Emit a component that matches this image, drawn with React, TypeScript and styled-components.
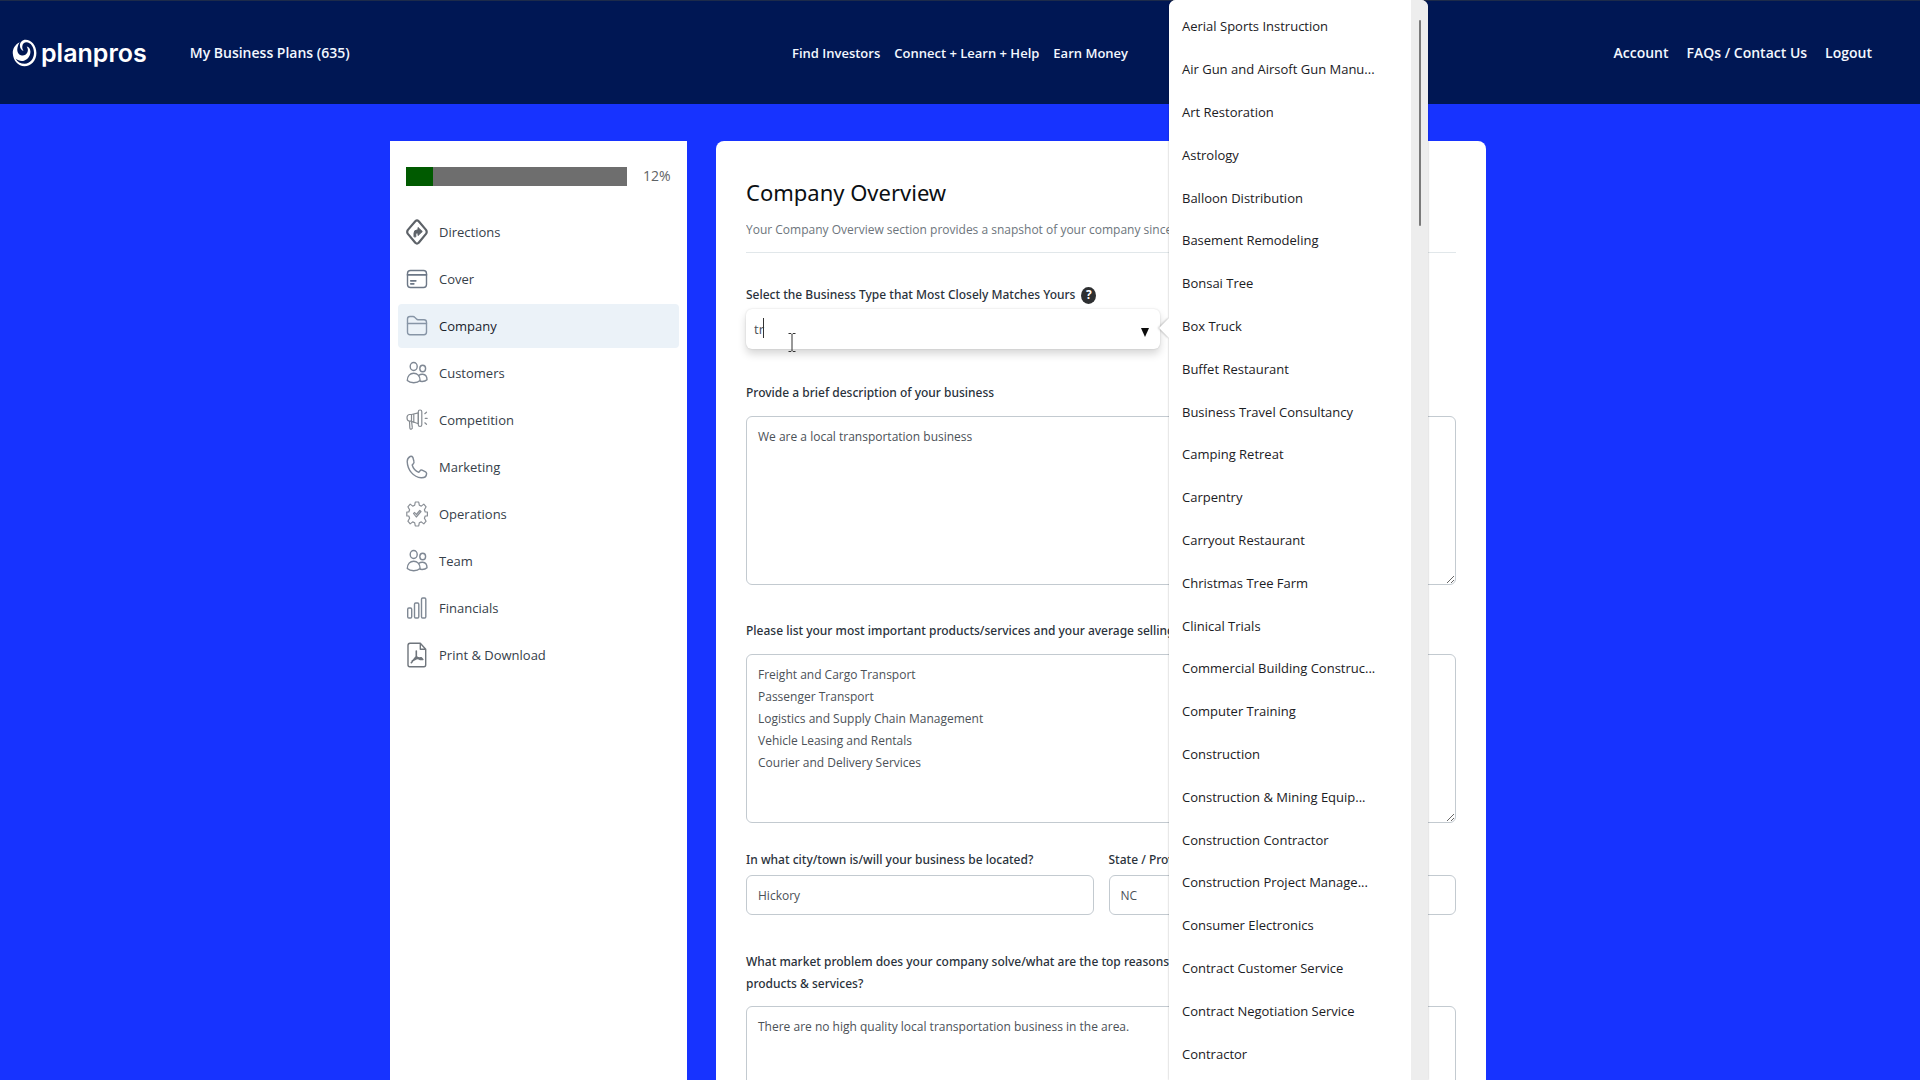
import React, { useState } from "react";
import type { ReactNode } from "react";
import styled, { createGlobalStyle } from "styled-components";

const color = {
  navy: "#001754",
  blue: "#1733ff",
  label: "#2a323b",
  muted: "#6d757c",
  value: "#4b5157",
  border: "#c3cad0",
  icon: "#7f8894",
  active: "#ebf2f8",
};

const GlobalStyle = createGlobalStyle`
  *, *::before, *::after { box-sizing: border-box; }
  body { margin: 0; background: ${color.blue}; }
  body, button, input, textarea {
    font-family: "Open Sans", "Noto Sans", sans-serif;
    font-size: 13px;
    line-height: 22px;
  }
  h1, p, ul { margin: 0; padding: 0; }
`;

const Page = styled.div`
  display: flex;
  flex-direction: column;
  height: 100vh;
  overflow: hidden;
  background: ${color.blue};
`;

/* ---------- Header ---------- */

const Header = styled.header`
  display: grid;
  grid-template-columns: 1fr auto 1fr;
  align-items: center;
  flex: none;
  min-height: 104px;
  padding: 0 12px;
  border-top: 1px solid #1d2b4a;
  background: ${color.navy};
`;

const HeaderStart = styled.div`
  display: flex;
  align-items: center;
  gap: 43px;
`;

const Brand = styled.a`
  display: flex;
  align-items: center;
  gap: 4px;
  color: #fff;
  font: 600 25px/32px Inter, sans-serif;
  text-decoration: none;
`;

const Nav = styled.nav<{ $gap: number; $size: number }>`
  display: flex;
  gap: ${(p) => p.$gap}px;
  font-size: ${(p) => p.$size}px;
`;

const EndNav = styled(Nav)`
  justify-content: flex-end;
  padding-right: 36px;
`;

const NavLink = styled.a`
  color: #f3f8ff;
  font-weight: 600;
  text-decoration: none;
`;

/* ---------- Layout ---------- */

const Content = styled.div`
  display: grid;
  grid-template-columns: 297px minmax(0, 1fr);
  gap: 29px;
  flex: 1;
  width: 100%;
  max-width: 1140px;
  min-height: 0;
  margin: 0 auto;
  padding: 37px 44px 0 0;
`;

const Sidebar = styled.aside`
  padding: 25px 8px;
  background: #fff;
`;

const ProgressRow = styled.div`
  display: flex;
  align-items: center;
  gap: 16px;
  padding: 0 8px;
  color: #5f6366;
  font-size: 14px;
  line-height: 20px;
`;

const ProgressTrack = styled.div`
  flex: 1;
  max-width: 221px;
  height: 19px;
  background: #6e6e6e;
`;

const ProgressFill = styled.div`
  height: 100%;
  background: #005a00;
`;

const Menu = styled.ul`
  display: flex;
  flex-direction: column;
  gap: 3px;
  margin-top: 24px;
  list-style: none;
`;

const MenuLink = styled.a<{ $active: boolean }>`
  display: flex;
  align-items: center;
  gap: 11px;
  height: 44px;
  padding: 0 8px;
  border-radius: 4px;
  background: ${(p) => (p.$active ? color.active : "transparent")};
  color: ${(p) => (p.$active ? "#1a222c" : "#36404a")};
  text-decoration: none;
`;

const Icon = styled.svg`
  flex: none;
  width: 22px;
  height: 26px;
  fill: none;
  stroke: ${color.icon};
  stroke-width: 1.4;
  stroke-linecap: round;
  stroke-linejoin: round;
`;

/* ---------- Form ---------- */

const Card = styled.main`
  padding: 35px 30px;
  border-radius: 8px 8px 0 0;
  background: #fff;
`;

const CardHead = styled.div`
  padding-bottom: 11px;
  border-bottom: 1px solid #e1e7ea;
`;

const Title = styled.h1`
  color: #0b0f13;
  font-family: "Noto Sans", sans-serif;
  font-size: 22px;
  font-weight: 400;
  line-height: 32px;
`;

const Subtitle = styled.p`
  margin-top: 11px;
  overflow: hidden;
  color: ${color.muted};
  font-size: 12px;
  white-space: nowrap;
`;

const Field = styled.div<{ $top: number; $gap: number }>`
  display: flex;
  flex-direction: column;
  gap: ${(p) => p.$gap}px;
  margin-top: ${(p) => p.$top}px;
`;

const LabelRow = styled.div`
  display: flex;
  align-items: center;
  gap: 6px;
`;

const Label = styled.label`
  color: ${color.label};
  font-family: "Noto Sans", sans-serif;
  font-size: 12px;
  font-weight: 500;
`;

const HelpButton = styled.button`
  width: 15px;
  height: 17px;
  padding: 0;
  border: 0;
  border-radius: 50%;
  background: #2d2f31;
  color: #fff;
  font-size: 12px;
  font-weight: 700;
  line-height: 16px;
`;

const TextArea = styled.textarea`
  display: block;
  width: 100%;
  height: 169px;
  padding: 9px 11px;
  border: 1px solid ${color.border};
  border-radius: 6px;
  outline: 0;
  background: #fff;
  color: ${color.value};
  font-size: 12px;
  resize: vertical;
`;

const TextInput = styled.input`
  width: 100%;
  height: 40px;
  padding: 0 11px;
  border: 1px solid ${color.border};
  border-radius: 6px;
  outline: 0;
  background: #fff;
  color: ${color.value};
  font-size: 12px;
`;

const Columns = styled.div`
  display: grid;
  grid-template-columns: 1fr 1fr;
  gap: 15px;
`;

/* ---------- Business type picker ---------- */

const Picker = styled.div`
  position: relative;
  display: flex;
  align-items: center;
  width: 414px;
  height: 40px;
  border-radius: 6px;
  background: #fff;
  box-shadow: 0 0 2px rgba(0, 0, 0, 0.14), 0 5px 8px rgba(0, 0, 0, 0.16);
`;

const PickerInput = styled.input`
  flex: 1;
  min-width: 0;
  height: 100%;
  padding: 0 8px;
  border: 0;
  outline: 0;
  background: transparent;
  color: ${color.value};
`;

const PickerToggle = styled.button`
  display: flex;
  width: 30px;
  height: 100%;
  padding: 6px 0 0;
  border: 0;
  background: transparent;
  align-items: center;
  justify-content: center;

  &::before {
    content: "";
    border: 4px solid transparent;
    border-top: 9px solid #0b0b0b;
    border-bottom: 0;
  }
`;

const Caret = styled.span`
  position: absolute;
  top: 9px;
  left: 17px;
  width: 1px;
  height: 20px;
  background: #333;
`;

const Pointer = styled.svg`
  position: absolute;
  top: 24px;
  left: 42px;
  width: 8px;
  height: 19px;
  fill: none;
  stroke: #333;
`;

const Popup = styled.div`
  position: absolute;
  z-index: 5;
  top: -309px;
  left: calc(100% + 9px);
  display: flex;
  width: 259px;
  height: 100vh;
  border-radius: 7px 7px 0 0;
  background: #fff;
  box-shadow: 0 0 2px rgba(0, 0, 0, 0.35);

  &::before {
    content: "";
    position: absolute;
    top: 321px;
    left: -7px;
    width: 14px;
    height: 14px;
    background: #fff;
    box-shadow: -1px 1px 2px rgba(0, 0, 0, 0.2);
    transform: rotate(45deg);
  }
`;

const Options = styled.ul`
  position: relative;
  display: grid;
  grid-auto-rows: 1fr;
  flex: 1;
  min-width: 0;
  padding: 5px 28px 5px 13px;
  border-radius: 7px 0 0 0;
  background: #fff;
  list-style: none;
`;

const Option = styled.li`
  display: flex;
  align-items: center;
  color: #1b2024;
  white-space: nowrap;
`;

const ScrollTrack = styled.div`
  display: flex;
  justify-content: center;
  width: 17px;
  padding: 20px 0;
  border-radius: 0 7px 0 0;
  background: #ededed;
`;

const ScrollThumb = styled.div`
  width: 2px;
  height: 206px;
  border-radius: 1px;
  background: #7a7a7a;
`;

/* ---------- Drawings ---------- */

function BrandMark() {
  return (
    <svg width="25" height="28" viewBox="0 0 25 28" fill="#fff" aria-hidden="true">
      <path d="M7.6 3.2C3 5.600 .5 9.800 .8 14.500C1.200 21.500 6.200 27.300 12.500 27.300C19.200 27.300 24.400 21.300 24.400 14C24.400 6.700 19.300 .8 13.600 .8C10.200 .8 7.900 3.300 7.900 6.400C7.900 9.300 9.600 11.200 11.500 12C10.600 10.300 10.100 8.900 10.300 7.200C10.600 4.700 12.300 3.200 14.500 3.200C18.700 3.300 22 8 22 13.800C22 20 17.900 24.700 12.900 24.700C8.600 24.700 5.200 22.700 3.500 19.400C6 21.500 9.400 22.600 12.500 21.400C16.400 20 18.600 16.500 18.400 12.300C18.300 9.700 16.800 7.800 14.700 7.600C16 9.400 16.300 11.600 15.300 13.600C14.100 16 11.500 17 8.900 16.200C5.400 15.100 3.500 10.500 7.600 3.200Z" />
    </svg>
  );
}

function MenuIcon({ name }: { name: string }) {
  const people = (
    <>
      <ellipse cx="7.700" cy="6.500" rx="3.500" ry="4" />
      <ellipse cx="16.700" cy="8.500" rx="2.900" ry="3.200" />
      <path d="M1.300 20.500c0-4.600 2.800-7.300 6.400-7.300s6.400 2.700 6.400 7.300c-1.700 1.600-4 2.200-6.400 2.200s-4.700-.6-6.400-2.200Z" />
      <path d="M12.700 15.500c1.100-.9 2.500-1.300 4-1.200 2.500.2 4.300 2.300 4.300 5.500-1.500 1.400-4 1.900-6.800 1.500" />
    </>
  );
  const art: Record<string, ReactNode> = {
    directions: (
      <g stroke="#5d6268">
        <path
          strokeWidth="2.200"
          d="M9.300 2.200q1.700-1.600 3.400 0l7.300 8.700q1.400 2 0 4l-7.300 8.900q-1.700 1.600-3.400 0l-7.400-8.900q-1.400-2 0-4Z"
        />
        <path fill="#5d6268" strokeWidth="1" d="M8 17.500v-3.300q0-3.200 3-3.200h1V8.500l4.300 4-4.300 4V14h-1.200q-1 0-1 1v2.500Z" />
      </g>
    ),
    cover: (
      <g stroke="#6c7786">
        <rect x="1.500" y="4.500" width="19" height="17" rx="3" />
        <path d="M1.500 8.800h19M4.800 14.800h5M4.800 17.800h3" strokeWidth="1.700" />
      </g>
    ),
    company: (
      <g stroke="#8795a6">
        <path d="M1.500 19V6q0-2.500 2.500-2.500h3q1 0 1.700.8L10.500 6q.6.700 1.500.7h6q2.500 0 2.500 2.500V19q0 2.700-2.500 2.700H4Q1.500 21.700 1.500 19Z" />
        <path d="M1.500 10.500h19" />
      </g>
    ),
    people,
    competition: (
      <g strokeWidth="1.200" stroke="#878c92">
        <path d="M5.500 7.500H3.300Q1 7.800 1 10.800t2.300 3.400h2.200ZM5.500 7.500l6.800-1.700v11l-6.800-2.600M3.500 14.300l.3 6.500q.2 1.700 1.500 1.300t1-1.700l-.7-5.500M7.800 15.500v-8" />
        <rect x="12.300" y="3" width="3.500" height="16.500" rx="1.700" />
        <path d="M18.800 6.700l1.700-1.500M19.200 11.300h2M18.800 15.800l1.700 1.500" />
      </g>
    ),
    phone: (
      <path d="M6.900 3.500Q5.800 1.900 4.200 2.500 1.300 3.800 1.200 7.500c.3 8.500 6.300 15.800 14 16.300 3.300.1 5.300-1.600 5.400-4.200q-.1-1.200-1-1.700l-3.500-1.700q-1.300-.5-2 .5l-1.300 1.600C8.800 16.700 7 14 6.200 11l1.300-1.500q.8-1 .4-2.300Z" />
    ),
    gear: (
      <g strokeWidth="1.200" stroke="#8a8f96">
        <path d="M9.300 1h3.400l.6 3.200 2 .9 2.500-2 2.300 2.700-1.700 3 .8 2.200h2.200v4h-2.200l-.8 2.200 1.700 3-2.300 2.700-2.500-2-2 .9-.6 3.200H9.300l-.6-3.200-2-.9-2.500 2-2.300-2.700 1.700-3L2.800 15H.8v-4h2l.8-2.200-1.700-3 2.300-2.700 2.500 2 2-.9Z" />
        <path d="M7.500 12.500l2.800 3.500 4.700-5.500-1.200-1-3.500 4-1.600-2Z" />
      </g>
    ),
    bars: (
      <>
        <rect x="1.700" y="13" width="4" height="10" rx="1.200" />
        <rect x="8.500" y="8" width="4.300" height="15" rx="1.200" />
        <rect x="15.500" y="3" width="4.300" height="20" rx="1.200" />
      </>
    ),
    pdf: (
      <g stroke="#6f757c">
        <path d="M2 3.500Q2 1.300 4 1.300h10.300l5.400 6v15.500q0 2-1.700 2H3.700q-1.700 0-1.700-2ZM14.300 1.300v6h5.400" />
        <path d="M10.300 9v5.500l-5 6.200M10.300 14.500q2.500 3.500 6.500 3l-1.500-1.600q-5-.2-9 3" strokeWidth="1.600" />
      </g>
    ),
  };
  return (
    <Icon viewBox="0 0 22 26" aria-hidden="true">
      {art[name]}
    </Icon>
  );
}

/* ---------- Data ---------- */

const sections = [
  ["Directions", "directions"],
  ["Cover", "cover"],
  ["Company", "company"],
  ["Customers", "people"],
  ["Competition", "competition"],
  ["Marketing", "phone"],
  ["Operations", "gear"],
  ["Team", "people"],
  ["Financials", "bars"],
  ["Print & Download", "pdf"],
];

const businessTypes = [
  "Aerial Sports Instruction",
  "Air Gun and Airsoft Gun Manu...",
  "Art Restoration",
  "Astrology",
  "Balloon Distribution",
  "Basement Remodeling",
  "Bonsai Tree",
  "Box Truck",
  "Buffet Restaurant",
  "Business Travel Consultancy",
  "Camping Retreat",
  "Carpentry",
  "Carryout Restaurant",
  "Christmas Tree Farm",
  "Clinical Trials",
  "Commercial Building Construc...",
  "Computer Training",
  "Construction",
  "Construction & Mining Equip...",
  "Construction Contractor",
  "Construction Project Manage...",
  "Consumer Electronics",
  "Contract Customer Service",
  "Contract Negotiation Service",
  "Contractor",
];

const products = [
  "Freight and Cargo Transport",
  "Passenger Transport",
  "Logistics and Supply Chain Management",
  "Vehicle Leasing and Rentals",
  "Courier and Delivery Services",
].join("\n");

const percent = 12;

function BusinessTypePicker() {
  const [query, setQuery] = useState("tr");
  return (
    <Picker>
      <PickerInput
        id="type"
        role="combobox"
        aria-expanded="true"
        aria-controls="type-options"
        value={query}
        onChange={(e) => setQuery(e.target.value)}
      />
      <PickerToggle type="button" aria-label="Show business types" />
      <Caret />
      <Pointer viewBox="0 0 8 19" aria-hidden="true">
        <path d="M.5.500h2.500l1 1 1-1h2.500M4 1.500v16M.5 18.500h2.500l1-1 1 1h2.500" />
      </Pointer>
      <Popup>
        <Options id="type-options" role="listbox">
          {businessTypes.map((type) => (
            <Option key={type} role="option" aria-selected="false">
              {type}
            </Option>
          ))}
        </Options>
        <ScrollTrack>
          <ScrollThumb />
        </ScrollTrack>
      </Popup>
    </Picker>
  );
}

export default function App() {
  return (
    <Page>
      <GlobalStyle />
      <Header>
        <HeaderStart>
          <Brand href="#home">
            <BrandMark />
            planpros
          </Brand>
          <Nav $gap={18} $size={14}>
            <NavLink href="#plans">My Business Plans (635)</NavLink>
          </Nav>
        </HeaderStart>
        <Nav $gap={14} $size={13}>
          <NavLink href="#investors">Find Investors</NavLink>
          <NavLink href="#connect">Connect + Learn + Help</NavLink>
          <NavLink href="#earn">Earn Money</NavLink>
        </Nav>
        <EndNav $gap={18} $size={14}>
          <NavLink href="#account">Account</NavLink>
          <NavLink href="#faqs">FAQs / Contact Us</NavLink>
          <NavLink href="#logout">Logout</NavLink>
        </EndNav>
      </Header>

      <Content>
        <Sidebar>
          <ProgressRow>
            <ProgressTrack role="progressbar" aria-label="Plan progress" aria-valuenow={percent}>
              <ProgressFill style={{ width: `${percent}%` }} />
            </ProgressTrack>
            {percent}%
          </ProgressRow>
          <Menu>
            {sections.map(([name, icon]) => (
              <li key={name}>
                <MenuLink href={`#${icon}`} $active={name === "Company"}>
                  <MenuIcon name={icon} />
                  {name}
                </MenuLink>
              </li>
            ))}
          </Menu>
        </Sidebar>

        <Card>
          <CardHead>
            <Title>Company Overview</Title>
            <Subtitle>Your Company Overview section provides a snapshot of your company since</Subtitle>
          </CardHead>

          <Field $top={31} $gap={3}>
            <LabelRow>
              <Label htmlFor="type">Select the Business Type that Most Closely Matches Yours</Label>
              <HelpButton type="button">?</HelpButton>
            </LabelRow>
            <BusinessTypePicker />
          </Field>

          <Field $top={33} $gap={12}>
            <Label htmlFor="description">Provide a brief description of your business</Label>
            <TextArea id="description" defaultValue="We are a local transportation business" />
          </Field>

          <Field $top={35} $gap={12}>
            <Label htmlFor="products">
              Please list your most important products/services and your average selling
            </Label>
            <TextArea id="products" defaultValue={products} />
          </Field>

          <Columns>
            <Field $top={26} $gap={4}>
              <Label htmlFor="city">In what city/town is/will your business be located?</Label>
              <TextInput id="city" defaultValue="Hickory" />
            </Field>
            <Field $top={26} $gap={4}>
              <Label htmlFor="state">State / Province</Label>
              <TextInput id="state" defaultValue="NC" />
            </Field>
          </Columns>

          <Field $top={36} $gap={11}>
            <Label htmlFor="problem">
              What market problem does your company solve/what are the top reasons
              <br />
              products &amp; services?
            </Label>
            <TextArea
              id="problem"
              defaultValue="There are no high quality local transportation business in the area."
            />
          </Field>
        </Card>
      </Content>
    </Page>
  );
}
